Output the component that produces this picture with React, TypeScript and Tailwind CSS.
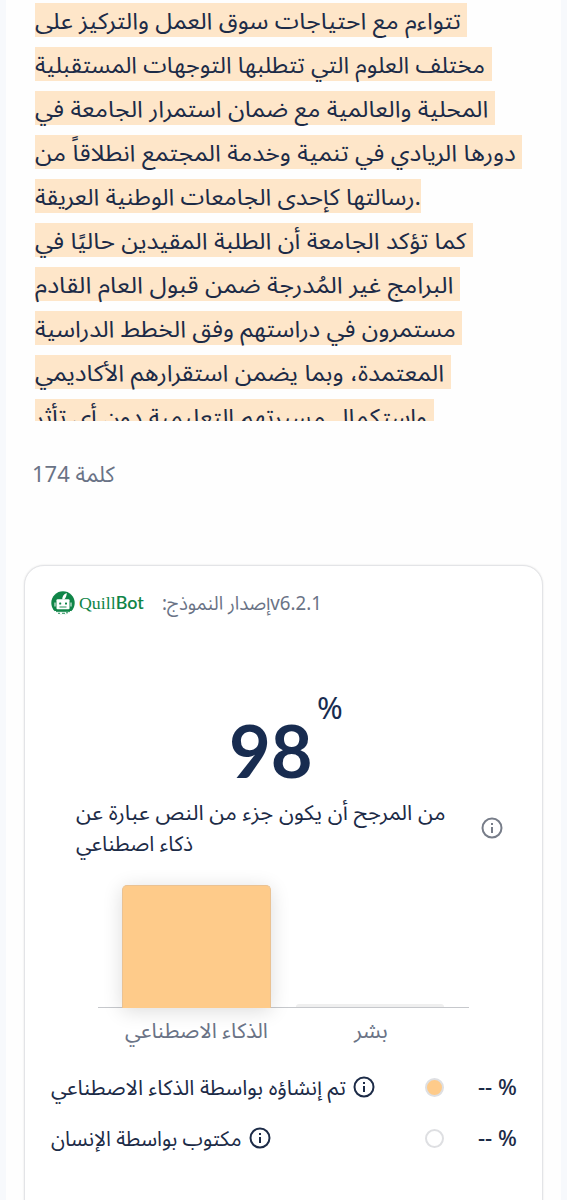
import React, { useLayoutEffect, useRef, useState } from 'react';

interface FitTextProps {
  width: number;
  className?: string;
  dir?: 'ltr' | 'rtl';
  children: React.ReactNode;
}

// Scales a single line horizontally so it always takes exactly `width` pixels
const FitText = ({ width, className = '', dir = 'ltr', children }: FitTextProps) => {
  const ref = useRef<HTMLSpanElement>(null);
  const [scale, setScale] = useState(1);

  useLayoutEffect(() => {
    if (ref.current && ref.current.offsetWidth > 0) {
      setScale(width / ref.current.offsetWidth);
    }
  }, [width, children]);

  return (
    <span className="block shrink-0" style={{ width }}>
      <span
        ref={ref}
        dir={dir}
        className={`block w-max origin-left whitespace-nowrap ${className}`}
        style={{ transform: `scaleX(${scale})` }}
      >
        {children}
      </span>
    </span>
  );
};

const InfoIcon = ({ className = '' }: { className?: string }) => (
  <svg viewBox="0 0 22 22" className={`h-[22px] w-[22px] shrink-0 ${className}`} fill="none">
    <circle cx="11" cy="11" r="9.5" stroke="currentColor" strokeWidth="2" />
    <path d="M11 10v6" stroke="currentColor" strokeWidth="2" />
    <path d="M11 6v2" stroke="currentColor" strokeWidth="2" />
  </svg>
);

const lines = [
  { text: 'تتواءم مع احتياجات سوق العمل والتركيز على', width: 426, box: 432 },
  { text: 'مختلف العلوم التي تتطلبها التوجهات المستقبلية', width: 450, box: 457 },
  { text: 'المحلية والعالمية مع ضمان استمرار الجامعة في', width: 453, box: 460 },
  { text: 'دورها الريادي في تنمية وخدمة المجتمع انطلاقاً من', width: 481, box: 487 },
  { text: 'رسالتها كإحدى الجامعات الوطنية العريقة.', width: 386, box: 386 },
  { text: 'كما تؤكد الجامعة أن الطلبة المقيدين حاليًا في', width: 431, box: 438 },
  { text: 'البرامج غير المُدرجة ضمن قبول العام القادم', width: 418, box: 425 },
  { text: 'مستمرون في دراستهم وفق الخطط الدراسية', width: 421, box: 427 },
  { text: 'المعتمدة، وبما يضمن استقرارهم الأكاديمي', width: 409, box: 416 },
  { text: 'واستكمال مسيرتهم التعليمية دون أي تأثر', width: 392, box: 399 },
];

const legend = [
  { label: 'تم إنشاؤه بواسطة الذكاء الاصطناعي', width: 295, dot: 'bg-[#fecb8a]' },
  { label: 'مكتوب بواسطة الإنسان', width: 191, dot: 'bg-white' },
];

const Logo = () => (
  <div className="flex items-center gap-1 text-[#108548]">
    <svg viewBox="0 0 24 24" className="h-6 w-6" fill="none">
      <circle cx="12" cy="12" r="11.7" fill="currentColor" />
      <path d="M11.2 8.500c0-3 1.500-5.500 4.600-6.500-.2 3-1 5-2.600 6.500z" fill="white" />
      <rect x="5.500" y="8.200" width="13" height="10" rx="1" fill="white" />
      <path d="M4 11.500v4M20 11.500v4" stroke="white" strokeWidth="1" />
      <rect x="8.200" y="11.500" width="2" height="2" rx=".6" fill="currentColor" />
      <rect x="14" y="11.500" width="2" height="2" rx=".6" fill="currentColor" />
      <path d="M8.500 16h7" stroke="currentColor" strokeWidth=".9" />
      <path d="M3 20h18c-2 3-5 4-9 4s-7-1-9-4z" fill="white" />
      <path d="M5 20.600h14M7 22.300h2m2 0h3m1-.5h2" stroke="currentColor" strokeWidth=".9" />
    </svg>
    <FitText width={65} className="text-[17px] leading-6">
      <span className="font-['Liberation_Serif']">Quill</span>
      <span className="font-['Lato'] font-semibold">Bot</span>
    </FitText>
  </div>
);

const App = () => {
  return (
    <div className="h-[1200px] overflow-hidden bg-[#f7f9fc] px-1.5 font-['Noto_Sans','Noto_Sans_Arabic','DejaVu_Sans',sans-serif] text-[#1c2b47]">
      <div className="h-full bg-[#fefefe]">
        <div className="flex h-[421px] flex-col gap-2.5 overflow-hidden pl-[29px] pt-[3px]">
          {lines.map((line) => (
            <div key={line.text} className="h-[34px] shrink-0 bg-[#fee6c9]" style={{ width: line.box }}>
              <FitText width={line.width} className="text-[23px] leading-[34px]">
                {line.text}
              </FitText>
            </div>
          ))}
        </div>

        <div className="h-36 pl-[26px] pt-9 text-[#6a7386]">
          <FitText width={83} className="text-[22px] leading-8">174 كلمة</FitText>
        </div>

        <div className="ml-[18px] h-[700px] w-[519px] rounded-[20px] border border-[#e3e4e7] bg-white shadow-[0_0_2px_rgba(0,0,0,0.12)]">
          <div className="flex h-[74px] items-center pl-[26px]">
            <Logo />
            <div className="ml-[18px] text-[#6a7386]">
              <FitText width={160} dir="rtl" className="text-[19px] leading-8">
                v6.2.1إصدار النموذج:
              </FitText>
            </div>
          </div>

          <div className="flex h-[157px] items-start pl-[204px] pt-[51px] text-[#182c50]">
            <FitText width={84} className="mt-[21px] font-['Lato'] text-[73px] leading-[76px] font-bold">
              98
            </FitText>
            <FitText width={26} className="ml-1 text-[31px] leading-[32px]">%</FitText>
          </div>

          <div className="flex h-[62px] items-center pl-[51px]">
            <div className="w-[405px]">
              <FitText width={370} className="text-[21px] leading-[31px]">
                من المرجح أن يكون جزء من النص عبارة عن
              </FitText>
              <FitText width={117} className="text-[21px] leading-[31px]">ذكاء اصطناعي</FitText>
            </div>
            <InfoIcon className="text-[#777d89]" />
          </div>

          <div className="ml-[73px] mt-[26px] flex h-[123px] w-[371px] items-end border-b border-[#c6c8cc] pl-6">
            <div className="-mb-px h-[123px] w-[149px] rounded-t-[5px] border border-b-0 border-[#eac293] bg-[#fecb8a] shadow-[0_3px_20px_rgba(0,0,0,0.14)]" />
            <div className="ml-[25px] h-[3px] w-[148px] rounded-t-sm bg-[#efefef]" />
          </div>

          <div className="flex h-[54px] items-start pl-[100px] pt-1.5 text-[#6a7386]">
            <FitText width={143} className="text-[21px] leading-8">الذكاء الاصطناعي</FitText>
            <div className="ml-[86px]">
              <FitText width={34} className="text-[21px] leading-8">بشر</FitText>
            </div>
          </div>

          {legend.map((item) => (
            <div key={item.label} className="flex h-[51px] items-center pl-[26px] pr-[25px]">
              <div className="-mt-0.5 flex flex-1 items-center gap-[7px]">
                <FitText width={item.width} className="text-[21px] leading-8">{item.label}</FitText>
                <InfoIcon />
              </div>
              <div className={`mr-[34px] h-[19px] w-[19px] rounded-full border-2 border-[#dedfe2] ${item.dot}`} />
              <FitText width={39} className="-mt-0.5 text-[21px] leading-8 font-medium">-- %</FitText>
            </div>
          ))}
        </div>
      </div>
    </div>
  );
};

export default App;
